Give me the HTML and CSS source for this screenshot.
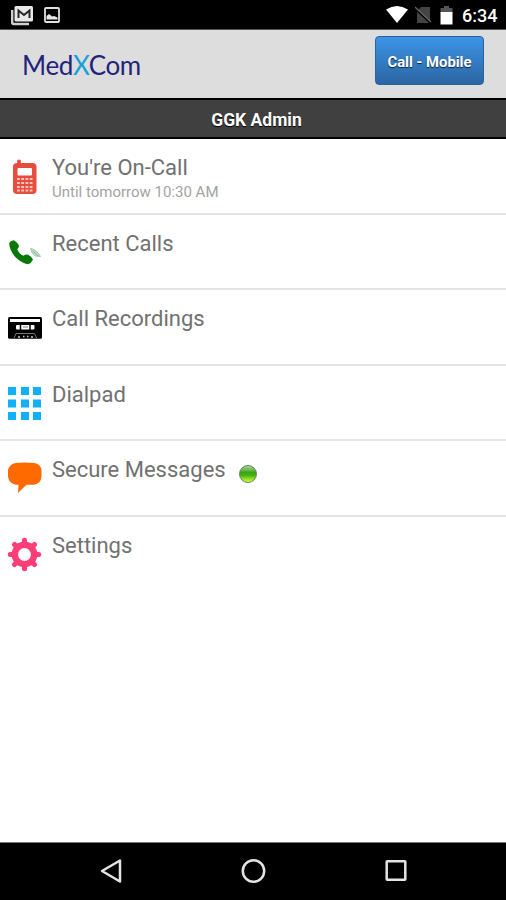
FILE: index.html
```html
<!DOCTYPE html>
<html lang="en">
<head>
<meta charset="utf-8">
<title>MedXCom</title>
<link rel="stylesheet" href="styles.css">
</head>
<body>
<div class="phone">
  <div class="status">
    <svg class="st-mail" width="24" height="22" viewBox="0 0 24 22"><path d="M2.200 5v12.500q0 1.500 1.500 1.500H19" fill="none" stroke="#d0d0d0" stroke-width="2.400"/><rect x="4.500" y="1" width="18.500" height="15.500" rx="1.500" fill="#e8e8e8"/><path d="M8.500 13V5.500l5.500 4.500L19.500 5.500V13" fill="none" stroke="#222" stroke-width="1.900"/></svg>
    <svg class="st-pic" width="16" height="16" viewBox="0 0 16 16"><rect x="1" y="1" width="14" height="14" rx="1" fill="none" stroke="#e0e0e0" stroke-width="1.800"/><path d="M2.500 12.500V9L5 7l3 2.500 2-.5 3.500 1.500v2z" fill="#e8e8e8"/></svg>
    <span class="spacer"></span>
    <svg class="st-wifi" width="24" height="19" viewBox="0 0 24 19"><path d="M1 4.500Q12-2.500 23 4.500L12 18z" fill="#fff"/></svg>
    <svg class="st-sim" width="17" height="18" viewBox="0 0 17 18"><path d="M6 1h9v16H2V5z" fill="#444"/><path d="M0 2.500l16 15" stroke="#000" stroke-width="2"/><path d="M0 1l16 15" stroke="#666" stroke-width="1.300"/></svg>
    <svg class="st-bat" width="13" height="19" viewBox="0 0 13 19"><path d="M4 0h5v2h3.500v5H.5V2H4z" fill="#555"/><path d="M.5 6h12v12.500H.5z" fill="#fff"/></svg>
    <span class="time">6:34</span>
  </div>
  <header class="header">
    <div class="logo">Med<span class="logo-x">X</span>Com</div>
    <div class="call-button">Call - Mobile</div>
  </header>
  <div class="title">GGK Admin</div>
  <main class="menu">
    <div class="row">
      <svg class="icon" width="34" height="36" viewBox="0 0 34 36"><circle cx="11" cy="2.500" r="2" fill="#e84c3d"/><rect x="9.500" y="2.500" width="3" height="5" fill="#e84c3d"/><rect x="5" y="4" width="23.500" height="31" rx="4" fill="#e84c3d"/><rect x="9.500" y="9" width="14.500" height="7.500" rx="1" fill="#fff"/><path d="M9 20h15.500M9 24h15.500M9 28h15.500M9 31.500h15.500" stroke="#f9c5bf" stroke-width="2" stroke-dasharray="2.800 1.430"/></svg>
      <div class="text"><div class="label">You're On-Call</div><div class="sub">Until tomorrow 10:30 AM</div></div>
    </div>
    <div class="row">
      <svg class="icon" width="34" height="36" viewBox="0 0 34 36"><path d="M1.200 8Q2.500 5.500 6 5.200q3.500 2.200 5 5.600Q10.800 13 9.200 14.200c1.200 3 3.300 5.200 6.300 6.600q2-1.700 4.500-1 3.500 1.600 5 4.700-1.500 3.700-5 4.700C11 28 1 17.500 1.200 8z" fill="#087908"/><path d="M22.500 13.500q5.500.5 10 8l-5-.5q-4-2-5-7.500z" fill="#c3dfcc" stroke="#9fc9ae"/><path d="M24.500 16q3 1.500 5.500 5" fill="none" stroke="#86b898"/></svg>
      <div class="text"><div class="label">Recent Calls</div></div>
    </div>
    <div class="row">
      <svg class="icon" width="34" height="36" viewBox="0 0 34 36"><rect y="7" width="34" height="21.800" rx="1.500" fill="#000"/><path d="M2 10.500h30" stroke="#fff" stroke-width="3"/><rect x="8" y="15" width="18.500" height="4.500" rx="1" fill="#fff"/><path d="M12.500 14v6M22 14v6" stroke="#000" stroke-width="1.500"/><path d="M15 17h5" stroke="#777"/><path d="M6 28l2-4.500h18.500l2 4.500" fill="none" stroke="#777"/><path d="M10 27h2M15 26.500h1.500M19 26.500h1.500M23 27h2" stroke="#ccc" stroke-width="1.500"/></svg>
      <div class="text"><div class="label">Call Recordings</div></div>
    </div>
    <div class="row">
      <svg class="icon" width="34" height="36" viewBox="0 0 34 36"><path d="M0 1h8v8H0zM13 1h8v8h-8zM25 1h8v8h-8zM0 13.500h8v8H0zM13 13.500h8v8h-8zM25 13.500h8v8h-8zM0 26h8v8H0zM13 26h8v8h-8zM25 26h8v8h-8z" fill="#11b0f8"/></svg>
      <div class="text"><div class="label">Dialpad</div></div>
    </div>
    <div class="row">
      <svg class="icon" width="34" height="36" viewBox="0 0 34 36"><path d="M8 2q9-.8 18 0 7 1 7.500 7.500v6q-.5 7-7.500 8.200h-7.500L10 32l.5-8.300H8q-7-1-8-8.200v-6Q1 3 8 2z" fill="#ff6a00"/></svg>
      <div class="text"><div class="label">Secure Messages</div></div>
      <span class="dot"></span>
    </div>
    <div class="row">
      <svg class="icon" width="34" height="36" viewBox="0 0 34 36"><g transform="translate(16.500 17.500)" fill="none" stroke="#ff3d77"><circle r="9.700" stroke-width="6.400"/><path d="M0-11v-3.200M0 11v3.200M-11 0h-3.200M11 0h3.200M-8-8l-2-2M8-8l2-2M-8 8l-2 2M8 8l2 2" stroke-width="5" stroke-linecap="round"/></g></svg>
      <div class="text"><div class="label">Settings</div></div>
    </div>
  </main>
  <nav class="nav">
    <svg width="24" height="28" viewBox="0 0 24 28"><path d="M3 14L21 3.500v21z" fill="none" stroke="#e4e4e4" stroke-width="2.500" stroke-linejoin="round"/></svg>
    <svg width="28" height="28" viewBox="0 0 28 28"><circle cx="13.500" cy="14" r="10.700" fill="none" stroke="#e4e4e4" stroke-width="2.500"/></svg>
    <svg width="24" height="28" viewBox="0 0 24 28"><rect x="2.700" y="4.200" width="18.600" height="18.600" rx=".5" fill="none" stroke="#e4e4e4" stroke-width="2.500"/></svg>
  </nav>
</div>
</body>
</html>
```
FILE: styles.css
```css
body { margin: 0; background: #fff; font-family: Roboto, "Liberation Sans", sans-serif; }
.phone { width: 506px; height: 900px; display: flex; flex-direction: column; overflow: hidden; }
.status { box-sizing: border-box; height: 30px; flex: none; display: flex; align-items: flex-start; background: #000; padding: 5px 9px 0 10px; border-bottom: 1px solid #555; }
.st-pic { margin: 2px 0 0 10px; }
.spacer { flex: 1; }
.st-wifi { margin-right: 6px; }
.st-sim { margin: 1px 8px 0 0; }
.st-bat { margin: 1px 9px 0 0; }
.time { color: #fff; font-size: 18px; line-height: 22px; font-weight: 500; width: 35px; white-space: nowrap; }
.header { box-sizing: border-box; height: 70px; flex: none; display: flex; justify-content: space-between; align-items: flex-start; background: #ddd; padding: 6px 22px 0; border-bottom: 2px solid #000; }
.logo { font-family: Lato, sans-serif; font-size: 26px; line-height: 32px; letter-spacing: -0.350px; color: #23237a; margin-top: 13px; }
.logo-x { color: #179fdc; }
.call-button { box-sizing: border-box; width: 109px; height: 49px; border: 1px solid #2b6299; border-radius: 4px; background: linear-gradient(#3d94e7, #2b65a3); color: #fff; font-size: 14.800px; line-height: 50px; font-weight: 700; text-align: center; text-shadow: 0 1px 1px #123; white-space: nowrap; }
.title { box-sizing: border-box; height: 39px; flex: none; background: #404040; border-bottom: 2px solid #000; color: #fff; font-size: 17.500px; line-height: 41px; font-weight: 700; text-align: center; padding-left: 7px; text-shadow: 0 1px 1px #000; }
.menu { flex: 1; }
.row { box-sizing: border-box; height: 75.600px; display: flex; align-items: flex-start; border-bottom: 2px solid #e4e4e4; padding: 20px 8px 0; }
.row:last-child { border-bottom: 0; }
.icon { flex: none; }
.text { margin: -5px 0 0 10px; }
.label { color: #717171; font-size: 22px; line-height: 28px; white-space: nowrap; }
.sub { color: #a3a3a3; font-size: 15px; line-height: 20px; white-space: nowrap; }
.dot { box-sizing: border-box; width: 18px; height: 18px; margin: 4px 0 0 13px; border: 1px solid #5c8a50; border-radius: 50%; background: linear-gradient(#a9d59b 0, #3da01c 42%, #45b80b 60%, #c9f545 95%); }
.nav { box-sizing: border-box; height: 58px; flex: none; display: flex; justify-content: space-between; align-items: flex-start; background: #000; border-top: 1px solid #777; padding: 14px 98px 0 99px; }
```
